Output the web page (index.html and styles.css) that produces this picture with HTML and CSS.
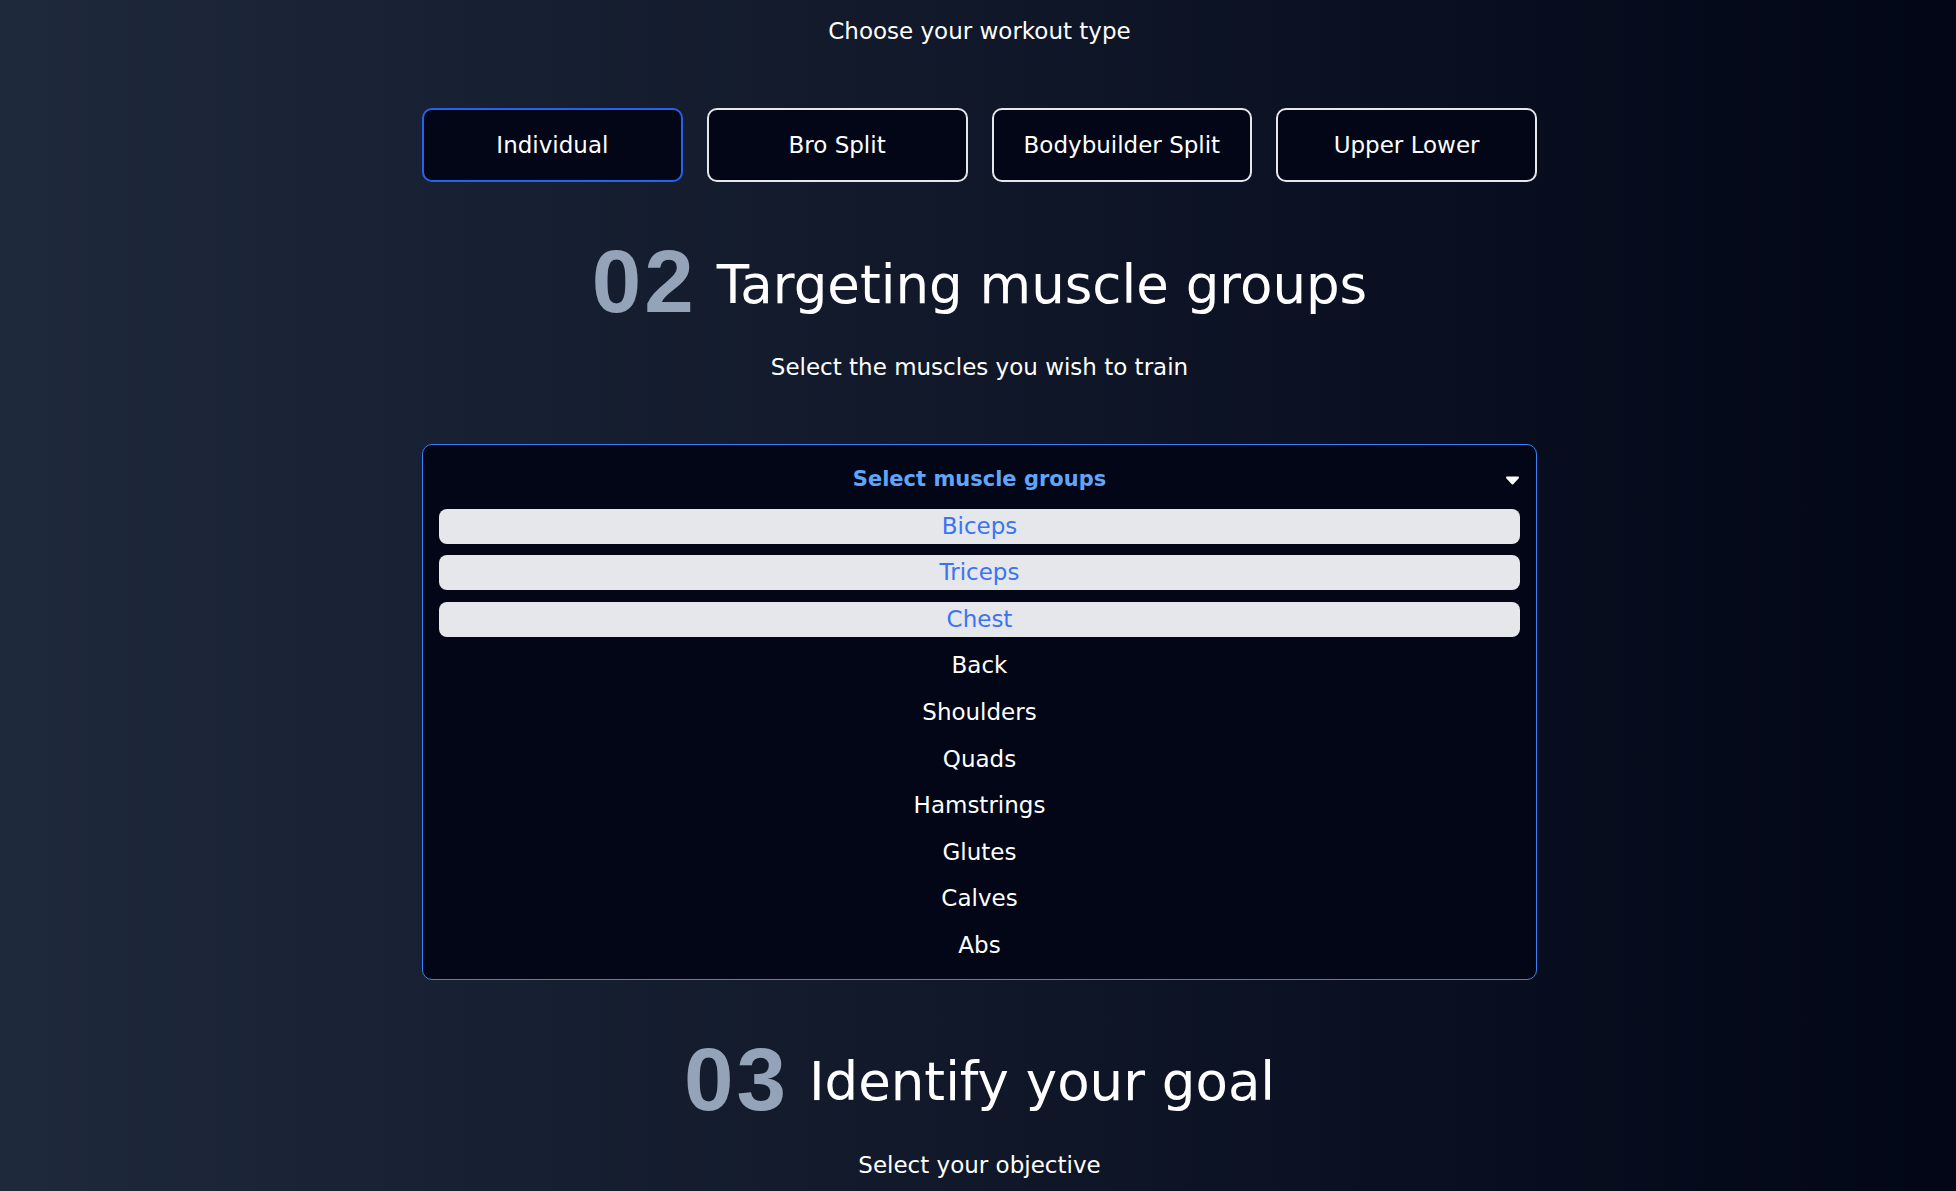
FILE: index.html
```html
<!DOCTYPE html>
<html lang="en">
<head>
<meta charset="utf-8">
<title>Workout builder</title>
<link rel="stylesheet" href="styles.css">
</head>
<body>
<main class="page">
  <p class="subtitle">Choose your workout type</p>
  <div class="types">
    <button class="type active">Individual</button>
    <button class="type">Bro Split</button>
    <button class="type">Bodybuilder Split</button>
    <button class="type">Upper Lower</button>
  </div>

  <h2 class="heading"><span class="num">02</span><span class="title">Targeting muscle groups</span></h2>
  <p class="subtitle after-heading">Select the muscles you wish to train</p>

  <div class="select">
    <div class="select-head">
      <span></span>
      <span class="select-title">Select muscle groups</span>
      <svg class="caret" viewBox="0 0 15 9" width="15" height="9" aria-hidden="true">
        <path d="M2 1.5 H13 L7.5 7.5 Z" fill="#fff" stroke="#fff" stroke-width="2" stroke-linejoin="round"/>
      </svg>
    </div>
    <div class="option selected">Biceps</div>
    <div class="option selected">Triceps</div>
    <div class="option selected">Chest</div>
    <div class="option">Back</div>
    <div class="option">Shoulders</div>
    <div class="option">Quads</div>
    <div class="option">Hamstrings</div>
    <div class="option">Glutes</div>
    <div class="option">Calves</div>
    <div class="option">Abs</div>
  </div>

  <h2 class="heading"><span class="num">03</span><span class="title">Identify your goal</span></h2>
  <p class="subtitle after-heading">Select your objective</p>
</main>
</body>
</html>
```

FILE: styles.css
```css
html {
  background: linear-gradient(to right, #1e293b, #020617);
  min-height: 100%;
}

body {
  margin: 0;
  padding-left: 3px;
  min-height: 100vh;
  overflow: hidden;
  color: #ffffff;
  font-family: "DejaVu Sans", "Open Sans", sans-serif;
}

.page {
  width: 1115px;
  margin: 0 auto;
  padding-top: 15px;
}

.subtitle {
  margin: 0;
  font-size: 23px;
  line-height: 32px;
  text-align: center;
}

.after-heading {
  margin-top: 26px;
}

.types {
  margin-top: 61px;
  display: grid;
  grid-template-columns: repeat(4, 1fr);
  gap: 24px;
}

.type {
  height: 74px;
  border: 2px solid #e5e7eb;
  border-radius: 10px;
  background: #020617;
  color: #ffffff;
  font-family: "DejaVu Sans", sans-serif;
  font-size: 23px;
  padding: 0;
}

.type.active {
  border-color: #2563eb;
}

.heading {
  margin: 55px 0 0;
  height: 88px;
  display: flex;
  justify-content: center;
  align-items: center;
  gap: 20px;
  font-weight: 400;
}

.num {
  font-family: "Liberation Sans", Arial, sans-serif;
  font-weight: 700;
  font-size: 89px;
  line-height: 88px;
  letter-spacing: 3px;
  color: #94a3b8;
}

.title {
  font-family: "DejaVu Sans", sans-serif;
  font-size: 53px;
  line-height: 1;
  margin-top: 6px;
  color: #ffffff;
}

.select {
  margin-top: 61px;
  border: 1px solid #3b82f6;
  border-radius: 10px;
  background: #020617;
  padding: 16px;
  display: flex;
  flex-direction: column;
  gap: 11.6px;
}

.select-head {
  height: 36px;
  display: grid;
  grid-template-columns: 1fr auto 1fr;
  align-items: center;
}

.select-title {
  font-weight: 700;
  font-size: 21px;
  color: #60a5fa;
}

.caret {
  justify-self: end;
  margin-top: 2px;
}

.option {
  height: 35px;
  line-height: 35px;
  text-align: center;
  font-size: 23px;
  border-radius: 8px;
  color: #ffffff;
}

.option.selected {
  background: #e5e7eb;
  color: #3a74f2;
}
```
